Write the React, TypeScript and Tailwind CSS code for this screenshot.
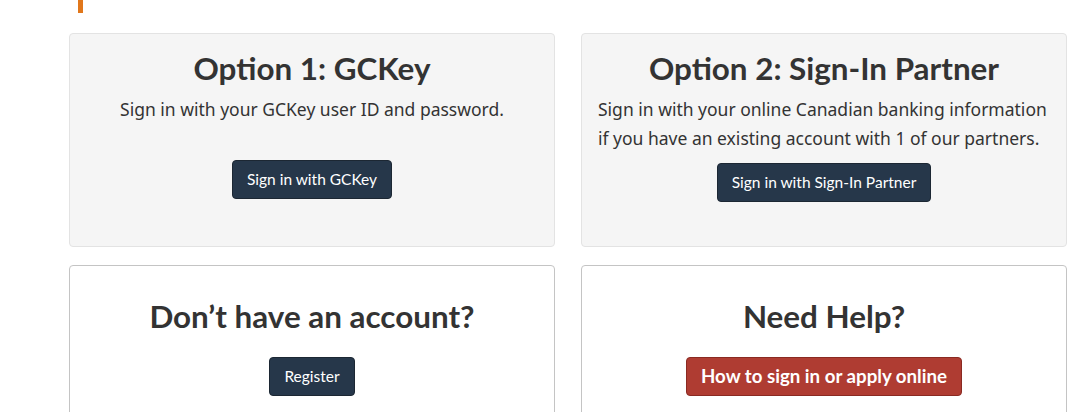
import React from "react";

const lato = { fontFamily: "Lato, 'Liberation Sans', sans-serif" };

export default function App() {
  return (
    <div className="w-[1068px] h-[412px] overflow-hidden bg-white text-[#333]">
      <div className="ml-[78px] w-[5px] h-[13px] bg-[#e1771b]" />
      <div className="ml-[69px] mt-[20px] w-[998px] grid grid-cols-2 gap-x-[26px] gap-y-[18px]">
        <div className="h-[214px] rounded-[4px] border border-[#e3e3e3] bg-[#f5f5f5] flex flex-col items-center px-[17px]">
          <h2 className="mt-[14px] text-[31.4px] leading-[40px] font-bold text-[#333]" style={lato}>Option 1: GCKey</h2>
          <p className="mt-[7px] text-[17.5px] leading-[29px] font-['Noto_Sans',sans-serif] text-center">Sign in with your GCKey user ID and password.</p>
          <button className="mt-[36px] h-[39px] px-[14px] rounded-[4px] border border-[#1c2733] bg-[#26374a] text-white text-[15.5px]" style={lato}>Sign in with GCKey</button>
        </div>
        <div className="h-[214px] rounded-[4px] border border-[#e3e3e3] bg-[#f5f5f5] flex flex-col items-center px-[16px]">
          <h2 className="mt-[14px] text-[31.4px] leading-[40px] font-bold text-[#333]" style={lato}>Option 2: Sign-In Partner</h2>
          <p className="mt-[7px] self-stretch text-[17.5px] leading-[29px] font-['Noto_Sans',sans-serif] text-left">Sign in with your online Canadian banking information if you have an existing account with 1 of our partners.</p>
          <button className="mt-[10px] h-[39px] px-[14px] rounded-[4px] border border-[#1c2733] bg-[#26374a] text-white text-[15.5px]" style={lato}>Sign in with Sign-In Partner</button>
        </div>
        <div className="h-[170px] rounded-[4px] border border-[#c4c4c4] bg-white flex flex-col items-center">
          <h2 className="mt-[30px] text-[31.4px] leading-[40px] font-bold text-[#333]" style={lato}>Don’t have an account?</h2>
          <button className="mt-[21px] h-[39px] px-[14px] rounded-[4px] border border-[#1c2733] bg-[#26374a] text-white text-[15.5px]" style={lato}>Register</button>
        </div>
        <div className="h-[170px] rounded-[4px] border border-[#c4c4c4] bg-white flex flex-col items-center">
          <h2 className="mt-[30px] text-[31.4px] leading-[40px] font-bold text-[#333]" style={lato}>Need Help?</h2>
          <button className="mt-[21px] h-[39px] px-[14px] rounded-[4px] border border-[#8a2a22] bg-[#af3c32] text-white text-[18.7px] font-bold" style={lato}>How to sign in or apply online</button>
        </div>
      </div>
    </div>
  );
}
